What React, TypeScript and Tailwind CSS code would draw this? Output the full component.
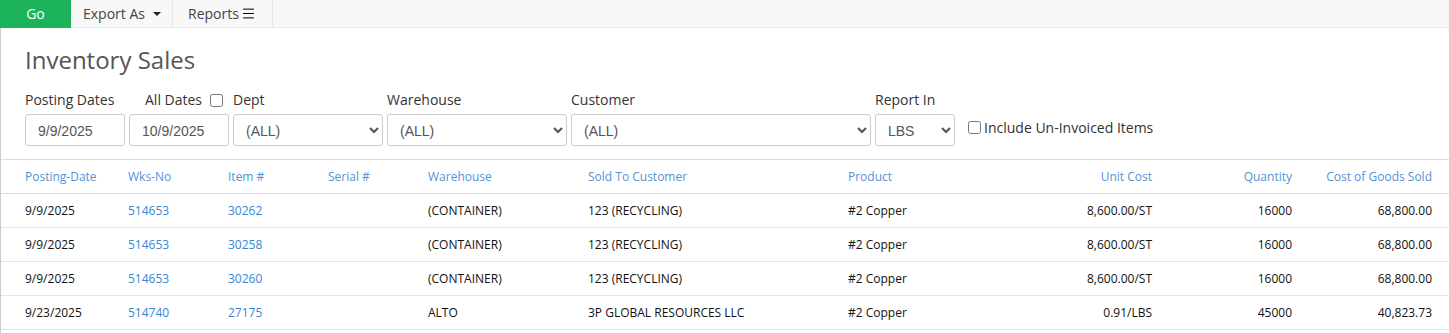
import { Menu } from 'lucide-react';

type Row = {
  date: string;
  wks: string;
  item: string;
  serial: string;
  warehouse: string;
  customer: string;
  product: string;
  unitCost: string;
  qty: string;
  cogs: string;
};

const rows: Row[] = [
  { date: '9/9/2025', wks: '514653', item: '30262', serial: '', warehouse: '(CONTAINER)', customer: '123 (RECYCLING)', product: '#2 Copper', unitCost: '8,600.00/ST', qty: '16000', cogs: '68,800.00' },
  { date: '9/9/2025', wks: '514653', item: '30258', serial: '', warehouse: '(CONTAINER)', customer: '123 (RECYCLING)', product: '#2 Copper', unitCost: '8,600.00/ST', qty: '16000', cogs: '68,800.00' },
  { date: '9/9/2025', wks: '514653', item: '30260', serial: '', warehouse: '(CONTAINER)', customer: '123 (RECYCLING)', product: '#2 Copper', unitCost: '8,600.00/ST', qty: '16000', cogs: '68,800.00' },
  { date: '9/23/2025', wks: '514740', item: '27175', serial: '', warehouse: 'ALTO', customer: '3P GLOBAL RESOURCES LLC', product: '#2 Copper', unitCost: '0.91/LBS', qty: '45000', cogs: '40,823.73' },
];

const cols =
  'grid grid-cols-[103px_100px_100px_100px_160px_260px_160px_144px_140px_140px] pl-[24px] pr-[17px]';

const field =
  "h-8 bg-white border border-[#ccc] rounded-[3px] text-[14px] text-[#555] font-['Liberation_Sans',Arial,sans-serif]";

export default function App() {
  return (
    <div className="w-[1449px] h-[333px] overflow-hidden bg-white font-['Open_Sans',sans-serif] text-[#333]">
      {/* Toolbar */}
      <div className="flex h-7 bg-[#f8f8f8] border-b border-[#e7e7e7] text-[14px] leading-[26px]">
        <button className="w-[71px] h-7 bg-[#1cb35a] text-white">Go</button>
        <button className="w-[102px] flex items-center pl-3 gap-2 border-r border-[#e7e7e7] text-[#444]">
          Export As
          <span className="w-0 h-0 border-l-[4px] border-r-[4px] border-t-[4px] border-l-transparent border-r-transparent border-t-[#222]" />
        </button>
        <button className="w-[100px] flex items-center pl-[15px] gap-[2px] border-r border-[#e7e7e7] text-[#444]">
          Reports
          <Menu size={15} strokeWidth={1.6} className="text-black" />
        </button>
      </div>

      {/* Panel */}
      <div className="border-l border-[#ccc] h-full">
        <div className="pl-[24px] pt-4">
          <h1 className="text-[24px] leading-[32px] text-[#555]">Inventory Sales</h1>

          <div className="flex items-end mt-[14px] pb-[13px]">
            <div className="flex flex-col gap-1 mr-1">
              <span className="text-[14px] leading-5">Posting Dates</span>
              <input className={`${field} w-[100px] px-3 pt-[2px]`} defaultValue="9/9/2025" />
            </div>
            <div className="flex flex-col gap-1 mr-1">
              <label className="flex items-center gap-2 pl-4 text-[14px] leading-5">
                All Dates
                <input type="checkbox" className="w-[13px] h-[13px]" />
              </label>
              <input className={`${field} w-[100px] px-3 pt-[2px]`} defaultValue="10/9/2025" />
            </div>
            <div className="flex flex-col gap-1 mr-1">
              <span className="text-[14px] leading-5">Dept</span>
              <select className={`${field} w-[150px] pl-2 pt-[2px]`}>
                <option>(ALL)</option>
              </select>
            </div>
            <div className="flex flex-col gap-1 mr-1">
              <span className="text-[14px] leading-5">Warehouse</span>
              <select className={`${field} w-[180px] pl-2 pt-[2px]`}>
                <option>(ALL)</option>
              </select>
            </div>
            <div className="flex flex-col gap-1 mr-1">
              <span className="text-[14px] leading-5">Customer</span>
              <select className={`${field} w-[300px] pl-2 pt-[2px]`}>
                <option>(ALL)</option>
              </select>
            </div>
            <div className="flex flex-col gap-1 mr-[13px]">
              <span className="text-[14px] leading-5">Report In</span>
              <select className={`${field} w-[80px] pl-2 pt-[2px]`}>
                <option>LBS</option>
              </select>
            </div>
            <label className="flex items-center gap-[3px] h-8 mb-[3px] text-[14px]">
              <input type="checkbox" className="w-[13px] h-[13px]" />
              Include Un-Invoiced Items
            </label>
          </div>
        </div>

        {/* Table */}
        <div className="border-t border-[#ddd] text-[12px]">
          <div className={`${cols} h-[34px] items-center border-b border-[#ddd] text-[#5592d4]`}>
            <span>Posting-Date</span>
            <span>Wks-No</span>
            <span>Item #</span>
            <span>Serial #</span>
            <span>Warehouse</span>
            <span>Sold To Customer</span>
            <span>Product</span>
            <span className="text-right">Unit Cost</span>
            <span className="text-right">Quantity</span>
            <span className="text-right">Cost of Goods Sold</span>
          </div>
          {rows.map((r, i) => (
            <div key={i} className={`${cols} h-[34px] items-center border-b border-[#e5e5e5] text-[#111]`}>
              <span>{r.date}</span>
              <a className="text-[#3a85d0]">{r.wks}</a>
              <a className="text-[#3a85d0]">{r.item}</a>
              <span>{r.serial}</span>
              <span>{r.warehouse}</span>
              <span>{r.customer}</span>
              <span>{r.product}</span>
              <span className="text-right">{r.unitCost}</span>
              <span className="text-right">{r.qty}</span>
              <span className="text-right">{r.cogs}</span>
            </div>
          ))}
        </div>
      </div>
    </div>
  );
}
